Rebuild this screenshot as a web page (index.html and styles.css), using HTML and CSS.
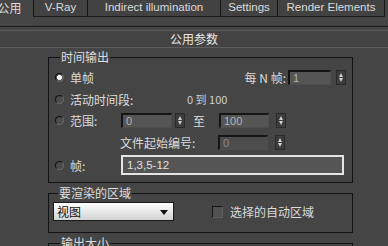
FILE: index.html
```html
<!DOCTYPE html>
<html lang="zh">
<head>
<meta charset="utf-8">
<link rel="stylesheet" href="styles.css">
</head>
<body>
<div class="tabs">
  <div class="tab tab-active">公用</div>
  <div class="tab tab-vray">V-Ray</div>
  <div class="tab tab-ind">Indirect illumination</div>
  <div class="tab tab-set">Settings</div>
  <div class="tab tab-ren">Render Elements</div>
</div>
<div class="panel">
  <div class="rollout-head">公用参数</div>
  <div class="rollout-body">
    <fieldset class="group group-time">
      <legend>时间输出</legend>
      <div class="row row-1">
        <span class="radio radio-on"></span><span class="label">单帧</span>
        <span class="every"><span class="every-label">每 N 帧:</span><span class="input input-n">1</span><span class="spin spin-n"></span></span>
      </div>
      <div class="row row-2">
        <span class="radio"></span><span class="label">活动时间段:</span>
        <span class="range-text">0 到 100</span>
      </div>
      <div class="row row-3">
        <span class="radio"></span><span class="label">范围:</span>
        <span class="input input-a">0</span><span class="spin spin-a"></span>
        <span class="to">至</span>
        <span class="input input-b">100</span><span class="spin spin-b"></span>
      </div>
      <div class="row row-4">
        <span class="file-label">文件起始编号:</span>
        <span class="input input-b input-dim">0</span><span class="spin spin-b"></span>
      </div>
      <div class="row row-5">
        <span class="radio"></span><span class="label">帧:</span>
        <span class="input input-frames">1,3,5-12</span>
      </div>
    </fieldset>
    <fieldset class="group group-area">
      <legend>要渲染的区域</legend>
      <div class="row row-area">
        <span class="select">视图<span class="caret"></span></span>
        <span class="check"></span><span class="check-label">选择的自动区域</span>
      </div>
    </fieldset>
    <fieldset class="group group-size">
      <legend>输出大小</legend>
      <div class="row"></div>
    </fieldset>
  </div>
</div>
</body>
</html>
```

FILE: styles.css
```css
* { box-sizing: border-box; }
html, body { margin: 0; padding: 0; }
body {
  width: 388px;
  height: 246px;
  overflow: hidden;
  background: #454545;
  color: #dcdcdc;
  font-family: "Liberation Sans", "Noto Sans CJK SC", sans-serif;
  font-size: 12px;
}
.tabs {
  display: flex;
  height: 26px;
  align-items: flex-start;
}
.tab {
  height: 17px;
  line-height: 15px;
  text-align: center;
  font-size: 11.5px;
  background: #424242;
  border-left: 1px solid #151515;
  border-bottom: 1px solid #1c1c1c;
  white-space: nowrap;
}
.tab-active {
  margin-left: -14px;
  width: 47px;
  height: 26px;
  border: none;
  background: #464646;
  font-size: 12px;
  line-height: 16px;
  font-family: "Noto Sans CJK SC", sans-serif;
}
.tab-vray { width: 54px; }
.tab-ind { width: 133px; }
.tab-set { width: 57px; }
.tab-ren { width: 108px; border-right: 1px solid #151515; }
.panel {
  border-top: 1px solid #1a1a1a;
  padding-top: 3px;
}
.rollout-head {
  height: 18px;
  border-top: 1px solid #5e5e5e;
  border-bottom: 1px solid #5e5e5e;
  background: #434343;
  text-align: center;
  font-family: "Noto Sans CJK SC", sans-serif;
  font-size: 12px;
  line-height: 15px;
  color: #e8e8e8;
}
.rollout-body {
  padding-left: 48px;
  width: 353px;
  box-sizing: content-box;
}
.group {
  margin: 2px 0 0 0;
  padding: 2px 6px 5px 6px;
  border: 1px solid #141414;
  min-width: 0;
  width: 305px;
}
.group legend {
  padding: 0 1px;
  margin-left: 5px;
  height: 14px;
  line-height: 14px;
  font-family: "Noto Sans CJK SC", sans-serif;
  font-size: 12px;
  color: #dedede;
}
.group-area { margin-top: 3px; padding: 2px 6px 11px 4px; }
.group-size { margin-top: 3px; height: 40px; }
.row {
  display: flex;
  align-items: center;
  font-family: "Noto Sans CJK SC", sans-serif;
}
.row-1 { height: 22px; }
.row-2 { height: 22px; }
.row-3 { height: 21px; }
.row-4 { height: 22px; }
.row-5 { height: 24px; }
.radio {
  width: 9px;
  height: 9px;
  border-radius: 50%;
  margin-right: 6px;
  background: #4b4b4b;
  border: 1px solid #111;
  border-right-color: #6a6a6a;
  border-bottom-color: #6a6a6a;
  flex: none;
}
.radio-on {
  background: radial-gradient(circle, #f2f2f2 0 2.2px, #5a5a5a 2.8px);
}
.label { width: 51px; white-space: nowrap; }
.every { margin-left: auto; display: flex; align-items: center; }
.every-label { margin-right: 2px; }
.input {
  display: flex;
  align-items: center;
  height: 15px;
  padding-left: 3px;
  background: #555;
  border: 1px solid #151515;
  border-right-color: #4e4e4e;
  border-bottom-color: #4e4e4e;
  border-top-width: 2px;
  border-left-width: 2px;
  color: #b4b4b4;
  font-family: "Liberation Sans", sans-serif;
  font-size: 11px;
}
.input-n { width: 43px; }
.input-a { width: 51px; }
.input-b { width: 50px; }
.input-dim { color: #8a8a8a; background: #4d4d4d; }
.input-frames {
  width: 223px;
  height: 20px;
  border: 2px solid #e4e4e4;
  background: #555;
  color: #e0e0e0;
  font-size: 11.5px;
  padding-left: 4px;
}
.spin {
  position: relative;
  width: 10px;
  height: 15px;
  background: #3c3c3c;
  border: 1px solid #2a2a2a;
  flex: none;
}
.spin::before, .spin::after {
  content: "";
  position: absolute;
  left: 2px;
  border-left: 2.5px solid transparent;
  border-right: 2.5px solid transparent;
}
.spin::before { top: 2px; border-bottom: 4px solid #cfcfcf; }
.spin::after { bottom: 2px; border-top: 4px solid #cfcfcf; }
.spin-n { margin-left: 5px; }
.spin-a { margin-left: 3px; }
.spin-b { margin-left: 7px; }
.range-text {
  margin-left: 66px;
  font-size: 11px;
  color: #d0d0d0;
}
.to { margin-left: 8px; width: 26px; }
.file-label { margin-left: 65px; width: 98px; white-space: nowrap; }
.select {
  position: relative;
  display: flex;
  align-items: center;
  width: 121px;
  height: 19px;
  padding-left: 3px;
  background: linear-gradient(#ffffff, #d2d2d2);
  border: 1px solid #1a1a1a;
  color: #111;
  font-size: 12px;
}
.caret {
  position: absolute;
  right: 5px;
  top: 7px;
  border-left: 4px solid transparent;
  border-right: 4px solid transparent;
  border-top: 5px solid #111;
}
.check {
  margin-left: 38px;
  width: 11px;
  height: 12px;
  background: #505050;
  border: 1px solid #161616;
  border-right-color: #5e5e5e;
  border-bottom-color: #5e5e5e;
  flex: none;
}
.check-label { margin-left: 7px; }
```
